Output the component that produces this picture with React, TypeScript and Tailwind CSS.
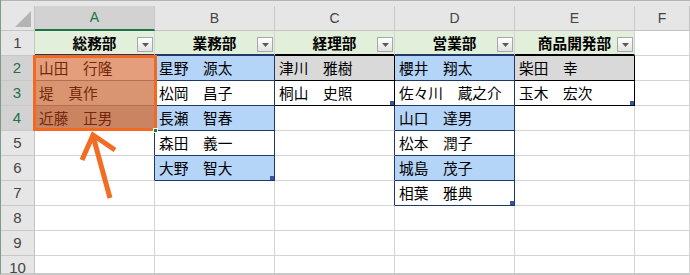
import React from 'react'

type Table = {
  col: number
  header: string
  rows: string[]
  dark: 'navy' | 'black'
}

const tables: Table[] = [
  { col: 0, header: '総務部', rows: ['山田　行隆', '堤　真作', '近藤　正男'], dark: 'navy' },
  { col: 1, header: '業務部', rows: ['星野　源太', '松岡　昌子', '長瀬　智春', '森田　義一', '大野　智大'], dark: 'navy' },
  { col: 2, header: '経理部', rows: ['津川　雅樹', '桐山　史照'], dark: 'black' },
  { col: 3, header: '営業部', rows: ['櫻井　翔太', '佐々川　蔵之介', '山口　達男', '松本　潤子', '城島　茂子', '相葉　雅典'], dark: 'navy' },
  { col: 4, header: '商品開発部', rows: ['柴田　幸', '玉木　宏次'], dark: 'black' },
]

const letters = ['A', 'B', 'C', 'D', 'E']
const rowNums = [1, 2, 3, 4, 5, 6, 7, 8, 9, 10]

const tableAt = (c: number, r: number) => {
  const t = tables.find((t) => t.col === c)
  if (!t) return null
  return r >= 1 && r <= t.rows.length + 1 ? t : null
}

const rightColor = (dark?: 'navy' | 'black' | null) =>
  dark === 'navy' ? 'border-r-[#1f3864]' : dark === 'black' ? 'border-r-black' : 'border-r-[#d4d4d4]'
const bottomColor = (dark?: 'navy' | 'black' | null) =>
  dark === 'navy' ? 'border-b-[#1f3864]' : dark === 'black' ? 'border-b-black' : 'border-b-[#d4d4d4]'

function FilterButton() {
  return (
    <div className="absolute right-[1px] bottom-[2px] w-[16px] h-[15px] border border-[#a8a8a8] bg-gradient-to-b from-white to-[#e2e2e2] flex items-center justify-center">
      <svg width="7" height="4" viewBox="0 0 7 4">
        <path d="M0 0 L7 0 L3.5 4 Z" fill="#5a5a5a" />
      </svg>
    </div>
  )
}

function Cell({ c, r }: { c: number; r: number }) {
  const t = tableAt(c, r)
  const right = tableAt(c + 1, r)

  // header row of the tables
  if (r === 1) {
    return (
      <div
        className={`relative w-[120px] shrink-0 border-r border-r-[#d4d4d4] border-b-2 ${
          t?.dark === 'black' ? 'border-b-black' : 'border-b-[#1f3864]'
        } bg-[#e2efda] flex items-center justify-center font-bold text-black`}
      >
        <span>{t?.header}</span>
        <FilterButton />
      </div>
    )
  }

  const idx = r - 2
  const text = t ? t.rows[idx] : ''
  let bg = 'bg-white'
  let color = 'text-black'
  let bottom = bottomColor(t?.dark)
  if (t && c === 0) {
    bg = idx === 0 ? 'bg-[#e49e7b]' : idx === 1 ? 'bg-[#d99471]' : 'bg-[#cb8462]'
    color = 'text-[#74280a]'
    bottom = 'border-b-[#b46f4e]'
  } else if (t && t.dark === 'navy' && idx % 2 === 0) {
    bg = 'bg-[#b4d4f8]'
  } else if (t && t.dark === 'black' && idx === 0) {
    bg = 'bg-[#d9d9d9]'
  }
  const isLast = t && idx === t.rows.length - 1 && c !== 0

  return (
    <div
      className={`relative w-[120px] shrink-0 border-r border-b ${rightColor(t?.dark ?? right?.dark)} ${bottom} ${bg} ${color} flex items-center pl-[4px] whitespace-pre`}
    >
      {text}
      {isLast && <div className="absolute right-0 bottom-0 w-[4px] h-[4px] bg-[#3a52a3]" />}
    </div>
  )
}

export default function App() {
  return (
    <div className="relative w-[690px] h-[275px] overflow-hidden bg-white border-l border-l-[#7f9a88] border-b-2 border-b-[#c8c8c8] font-['Noto_Sans_CJK_JP',sans-serif] text-[14.67px]">
      {/* top strip */}
      <div className="h-[6px] bg-[#e6e6e6] border-t border-t-[#b4b4b4]" />

      {/* column headers */}
      <div className="flex h-[25px] font-['Liberation_Sans',sans-serif] text-[14px] text-[#444]">
        <div className="relative w-[34px] shrink-0 bg-[#e6e6e6] border-r border-b border-[#c4c4c4]">
          <svg className="absolute right-[3px] bottom-[3px]" width="16" height="16" viewBox="0 0 16 16">
            <path d="M16 0 L16 16 L0 16 Z" fill="#b4b4b4" />
          </svg>
        </div>
        {letters.map((l, i) => (
          <div
            key={l}
            className={`w-[120px] shrink-0 flex items-center justify-center border-r border-r-[#c8c8c8] ${
              i === 0
                ? 'bg-[#d2d2d2] text-[#217346] border-b-2 border-b-[#217346]'
                : 'bg-[#e6e6e6] border-b border-b-[#c4c4c4]'
            }`}
          >
            {l}
          </div>
        ))}
        <div className="flex-1 flex items-center justify-center bg-[#e6e6e6] border-b border-r border-[#c4c4c4]">
          F
        </div>
      </div>

      {/* rows */}
      {rowNums.map((r) => (
        <div key={r} className="flex h-[25px]">
          <div
            className={`w-[34px] shrink-0 flex items-center justify-center border-b border-b-[#c8c8c8] font-['Liberation_Sans',sans-serif] text-[15px] ${
              r >= 2 && r <= 4
                ? 'bg-[#d2d2d2] text-[#217346] border-r-2 border-r-[#217346]'
                : 'bg-[#e6e6e6] text-[#444] border-r border-r-[#c4c4c4]'
            }`}
          >
            {r}
          </div>
          {[0, 1, 2, 3, 4].map((c) => (
            <Cell key={c} c={c} r={r} />
          ))}
          <div className="flex-1 border-b border-r border-[#d4d4d4]" />
        </div>
      ))}

      {/* selection of A2:A4 */}
      <div className="absolute left-[32px] top-[55px] w-[124px] h-[76px] border-[3px] border-[#f26a22]" />
      <div className="absolute left-[152px] top-[128px] w-[5px] h-[5px] bg-[#217346] border border-white" />

      {/* arrow */}
      <svg className="absolute left-0 top-0 pointer-events-none" width="690" height="275">
        <g stroke="#f26d24" strokeWidth="5" fill="none">
          <line x1="109" y1="198" x2="92" y2="136" />
          <polyline points="81,160 92,135 114,150" strokeLinejoin="miter" />
        </g>
      </svg>
    </div>
  )
}
